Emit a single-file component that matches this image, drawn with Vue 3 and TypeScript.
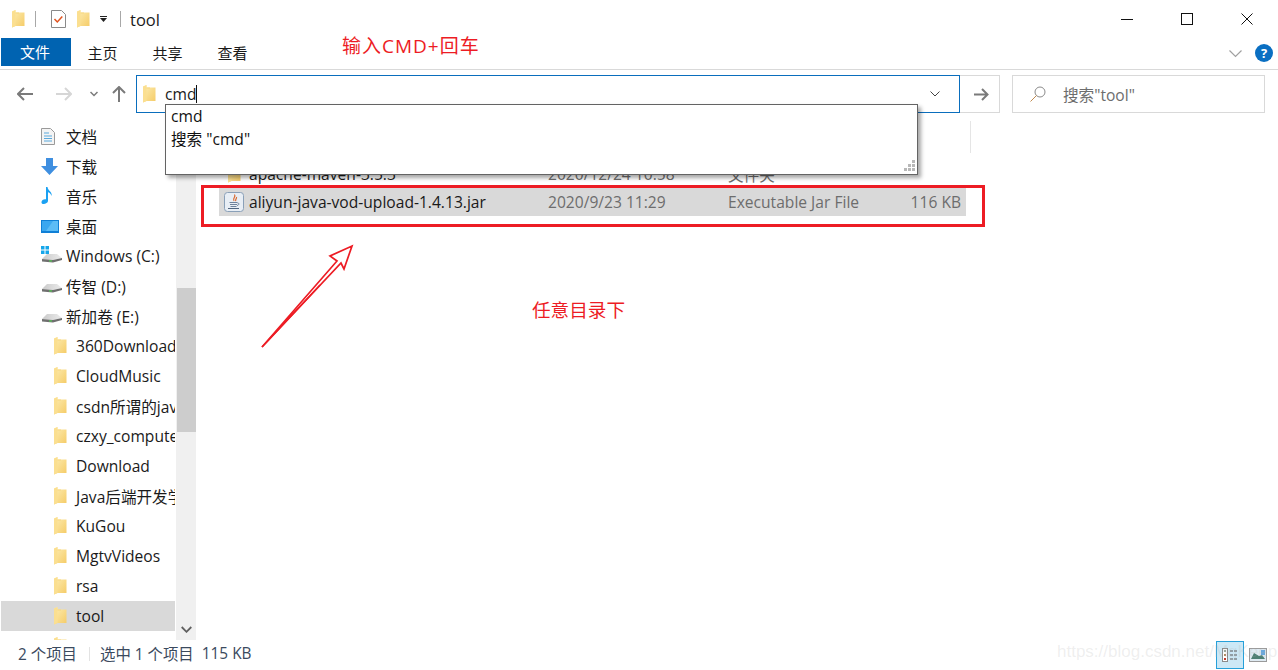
<template>
  <div class="explorer">
    <svg width="0" height="0" class="defs">
      <defs>
        <linearGradient id="fold" x1="0" y1="0" x2="1" y2="1">
          <stop offset="0" stop-color="#fdeeb5" />
          <stop offset="1" stop-color="#f5cb66" />
        </linearGradient>
        <linearGradient id="driveTop" x1="0" y1="0" x2="1" y2="0">
          <stop offset="0" stop-color="#c9c9c9" />
          <stop offset="1" stop-color="#ececec" />
        </linearGradient>
        <symbol id="folder" viewBox="0 0 13 18">
          <path d="M0 1.500 L3.500 0 V2.500 H12.500 V16 H3.500 L0 17.500 Z" fill="url(#fold)" />
          <path d="M0 1.500 L3.500 0 V16 L0 17.500 Z" fill="#fbdf90" />
          <path d="M3.500 2.500 H7 V3.500 H3.500 Z" fill="#f7d77f" />
        </symbol>
        <symbol id="drive" viewBox="0 0 20 10">
          <path d="M0 6 L5 1 H15 L20 5 L11 7 Z" fill="url(#driveTop)" />
          <path d="M0 6 L11 7 L20 5 V7 L11 9.500 L0 8.500 Z" fill="#6f6f6f" />
          <rect x="7" y="7.300" width="3" height="1.300" fill="#58c558" />
        </symbol>
      </defs>
    </svg>

    <header class="titlebar">
      <svg class="ic folder-ic"><use href="#folder" /></svg>
      <span class="vsep first-sep"></span>
      <svg class="check" width="15" height="18" viewBox="0 0 15 18">
        <path d="M.5.5h10l4 4v13H.5z" fill="#fff" stroke="#8a8a8a" />
        <path d="M3.500 9l2.800 3 5-5.500" fill="none" stroke="#e0531f" stroke-width="1.500" />
      </svg>
      <svg class="ic folder-ic second-folder"><use href="#folder" /></svg>
      <svg class="drop" width="7" height="6" viewBox="0 0 7 6">
        <path d="M0 0h7v1H0zM0 2h7L3.500 6z" fill="#222" />
      </svg>
      <span class="vsep second-sep"></span>
      <span class="title">tool</span>
      <div class="win-controls">
        <svg width="12" height="12" viewBox="0 0 12 12"><path d="M0 6.500h12" stroke="#111" /></svg>
        <svg width="12" height="12" viewBox="0 0 12 12"><rect x=".5" y=".5" width="11" height="11" fill="none" stroke="#111" /></svg>
        <svg width="12" height="12" viewBox="0 0 12 12"><path d="M.5.5l11 11M11.500.5l-11 11" stroke="#111" /></svg>
      </div>
    </header>

    <nav class="ribbon">
      <span class="tab file-tab">文件</span>
      <span v-for="t in tabs" :key="t" class="tab">{{ t }}</span>
      <span class="spacer"></span>
      <svg class="ribbon-chevron" width="13" height="8" viewBox="0 0 13 8">
        <path d="M.5.5l6 6 6-6" fill="none" stroke="#a0a0a0" stroke-width="1.200" />
      </svg>
      <span class="help">?</span>
    </nav>

    <div class="navbar">
      <div class="nav-buttons">
        <svg width="16" height="14" viewBox="0 0 16 14"><path d="M1 7h15M7 1L1 7l6 6" fill="none" stroke="#7a7a7a" stroke-width="2" /></svg>
        <svg class="fwd" width="16" height="14" viewBox="0 0 16 14"><path d="M0 7h15M9 1l6 6-6 6" fill="none" stroke="#d6d6d6" stroke-width="2" /></svg>
        <svg class="hist" width="8" height="6" viewBox="0 0 8 6"><path d="M.5 1L4 4.500 7.500 1" fill="none" stroke="#7a7a7a" stroke-width="1.500" /></svg>
        <svg class="up" width="14" height="16" viewBox="0 0 14 16"><path d="M7 16V1M1 7l6-6 6 6" fill="none" stroke="#7a7a7a" stroke-width="2" /></svg>
      </div>
      <div class="address">
        <svg class="ic folder-ic"><use href="#folder" /></svg>
        <span class="address-text">cmd</span><span class="caret"></span>
        <span class="spacer"></span>
        <svg width="10" height="6" viewBox="0 0 10 6"><path d="M.5.5L5 5 9.500.5" fill="none" stroke="#444" /></svg>
      </div>
      <div class="go">
        <svg width="15" height="13" viewBox="0 0 15 13"><path d="M0 6.500h14M8 1l5.500 5.500L8 12" fill="none" stroke="#7a7a7a" stroke-width="2" /></svg>
      </div>
      <div class="search">
        <svg width="16" height="16" viewBox="0 0 16 16"><circle cx="10" cy="6" r="5" fill="none" stroke="#8a8a8a" /><path d="M6.500 9.500L.5 15.500" stroke="#c08a50" /></svg>
        <span>搜索"tool"</span>
      </div>
    </div>

    <main class="body">
      <aside class="sidebar">
        <ul class="tree">
          <li v-for="q in quick" :key="q.label" class="row">
            <span class="quick-ic">
              <svg v-if="q.kind === 'doc'" width="14" height="17" viewBox="0 0 14 17">
                <path d="M.5.5h9l4 4v12H.5z" fill="#f4f4f4" stroke="#9a9a9a" />
                <path d="M3 5h5M3 8h8M3 10.500h8M3 13h8" stroke="#5aa9dc" />
              </svg>
              <svg v-else-if="q.kind === 'dl'" width="17" height="17" viewBox="0 0 17 17">
                <path d="M5 0h7v8h5l-8.500 9L0 8h5z" fill="#3f8fe0" />
              </svg>
              <svg v-else-if="q.kind === 'music'" width="12" height="18" viewBox="0 0 12 18">
                <path d="M5 0h1.500c.5 4 5 4.500 4 9-.5-2.500-2.500-3.500-3.500-3.800V14c0 2.500-6 4.500-6.500 1.500C.2 13 3 11.800 5 12.300z" fill="#1ba1f2" />
              </svg>
              <svg v-else-if="q.kind === 'desk'" width="18" height="13" viewBox="0 0 18 13">
                <rect width="18" height="13" fill="#0f7fd6" />
                <path d="M1 1h16v10H1z" fill="#3aa7f0" />
                <path d="M5 11l7-10h5v10z" fill="#5cbcf6" />
              </svg>
              <span v-else class="drive-wrap">
                <svg class="win-logo" v-if="q.kind === 'win'" width="8" height="8" viewBox="0 0 8 8">
                  <path d="M0 0h3.500v3.500H0zM4.500 0H8v3.500H4.500zM0 4.500h3.500V8H0zM4.500 4.500H8V8H4.500z" fill="#16a6ea" />
                </svg>
                <svg class="drive-ic"><use href="#drive" /></svg>
              </span>
            </span>
            <span class="row-label">{{ q.label }}</span>
          </li>
          <li v-for="f in folders" :key="f" class="row folder-row" :class="{ active: f === 'tool' }">
            <svg class="ic folder-ic"><use href="#folder" /></svg>
            <span class="row-label">{{ f }}</span>
          </li>
          <li class="row folder-row">
            <svg class="ic folder-ic"><use href="#folder" /></svg>
          </li>
        </ul>
        <div class="scrollbar">
          <div class="scroll-gap"></div>
          <div class="thumb"></div>
          <span class="spacer"></span>
          <svg class="scroll-down" width="11" height="7" viewBox="0 0 11 7"><path d="M.7 1L5.500 5.800 10.300 1" fill="none" stroke="#606060" stroke-width="1.800" /></svg>
        </div>
      </aside>

      <section class="files">
        <div class="col-head"><span class="col-sep"></span></div>
        <div class="file-row">
          <span class="file-ic"><svg class="ic folder-ic flat"><use href="#folder" /></svg></span>
          <span class="f-name">apache-maven-3.5.3</span>
          <span class="f-date">2020/12/24 10:58</span>
          <span class="f-type">文件夹</span>
          <span class="f-size"></span>
        </div>
        <div class="file-row selected">
          <span class="file-ic">
            <svg width="20" height="20" viewBox="0 0 20 20">
              <rect x=".5" y=".5" width="19" height="19" rx="3" fill="#e8eef5" stroke="#8aa0b8" />
              <path d="M10.500 2.500c2 2.500-2.500 3.500-.5 6.500M12.500 5c.5 2-2 2.500-.5 4" fill="none" stroke="#d9662b" stroke-width="1.200" />
              <path d="M5.500 10.500h8M6 12.500h7M6.500 14.500h6" stroke="#6f829b" />
              <path d="M13.500 11c2 0 2 2-.5 2.500" fill="none" stroke="#6f829b" />
              <path d="M4 16.500h11" stroke="#4f6580" />
            </svg>
          </span>
          <span class="f-name">aliyun-java-vod-upload-1.4.13.jar</span>
          <span class="f-date">2020/9/23 11:29</span>
          <span class="f-type">Executable Jar File</span>
          <span class="f-size">116 KB</span>
        </div>
      </section>
    </main>

    <footer class="statusbar">
      <span class="st-count">2 个项目</span>
      <span class="st-sep"></span>
      <span class="st-sel">选中 1 个项目</span>
      <span>115 KB</span>
      <span class="spacer"></span>
      <span class="view-btn on">
        <svg width="16" height="14" viewBox="0 0 16 14">
          <rect x=".5" y=".5" width="5" height="13" fill="#fff" stroke="#8a8a8a" />
          <path d="M2 2h2v2H2z" fill="#9aa89a" />
          <path d="M2 6h2v2H2z" fill="#b08a60" />
          <path d="M2 10h2v2H2z" fill="#c0392b" />
          <path d="M8 3h8M8 7h8M8 11h8" stroke="#555" stroke-dasharray="3 1" />
        </svg>
      </span>
      <span class="view-btn">
        <svg width="18" height="14" viewBox="0 0 18 14">
          <rect x=".5" y=".5" width="17" height="13" fill="#dfeaf2" stroke="#9a9a9a" />
          <path d="M12 2h4v5h-4z" fill="#6aa8dc" />
          <path d="M2 11l3-6 5 3 3-1 3 4z" fill="#4d7f73" />
        </svg>
      </span>
    </footer>

    <div class="suggest">
      <div class="suggest-item">cmd</div>
      <div class="suggest-item">搜索 "cmd"</div>
      <svg class="grip" width="12" height="12" viewBox="0 0 12 12">
        <path d="M9 0h3v3H9zM5 4h3v3H5zM9 4h3v3H9zM1 8h3v3H1zM5 8h3v3H5zM9 8h3v3H9z" fill="#b8b8b8" />
      </svg>
    </div>

    <span class="note note-cmd">输入CMD+回车</span>
    <span class="note note-dir">任意目录下</span>
    <div class="red-box"></div>
    <svg class="red-arrow" width="100" height="110" viewBox="0 0 100 110">
      <path d="M2 105L77 19L70 14L92 4L84 27L81 21Z" fill="none" stroke="#ed1c24" stroke-width="1.700" stroke-linejoin="miter" />
      <path d="M2 105L60 43" stroke="#ed1c24" stroke-width="1.500" />
    </svg>
    <span class="watermark">https://blog.csdn.net/MgKeep</span>
  </div>
</template>

<script setup lang="ts">
interface QuickItem {
  label: string
  kind: string
}

const tabs = ['主页', '共享', '查看']

const quick: QuickItem[] = [
  { label: '文档', kind: 'doc' },
  { label: '下载', kind: 'dl' },
  { label: '音乐', kind: 'music' },
  { label: '桌面', kind: 'desk' },
  { label: 'Windows (C:)', kind: 'win' },
  { label: '传智 (D:)', kind: 'drive' },
  { label: '新加卷 (E:)', kind: 'drive' }
]

const folders = [
  '360Downloads',
  'CloudMusic',
  'csdn所谓的java',
  'czxy_computer',
  'Download',
  'Java后端开发学习',
  'KuGou',
  'MgtvVideos',
  'rsa',
  'tool'
]
</script>

<style>
html,
body {
  overflow: hidden;
  background: #fff;
}
</style>

<style scoped>
.explorer {
  position: relative;
  width: 1278px;
  height: 670px;
  overflow: hidden;
  display: flex;
  flex-direction: column;
  background: #fff;
  color: #1a1a1a;
  font-family: "Open Sans", "Noto Sans CJK SC", sans-serif;
  font-size: 15.6px;
}

.defs {
  position: absolute;
}

.spacer {
  flex: 1;
}

.ic {
  display: block;
  flex: none;
}

.folder-ic {
  width: 13px;
  height: 18px;
}

.titlebar {
  height: 38px;
  flex: none;
  display: flex;
  align-items: center;
  padding-left: 12px;
}

.vsep {
  width: 1px;
  height: 16px;
  background: #a8a8a8;
}

.first-sep {
  margin-left: 10px;
}

.check {
  margin-left: 15px;
}

.second-folder {
  margin-left: 11px;
}

.drop {
  margin-left: 10px;
}

.second-sep {
  margin-left: 13px;
}

.title {
  margin-left: 9px;
  font-size: 16.5px;
}

.win-controls {
  margin-left: auto;
  display: flex;
  gap: 48px;
  padding-right: 25px;
}

.ribbon {
  height: 32px;
  flex: none;
  display: flex;
  align-items: flex-start;
  border-bottom: 1px solid #d9d9d9;
  box-sizing: border-box;
  padding-left: 1px;
}

.tab {
  width: 65px;
  height: 28px;
  box-sizing: border-box;
  padding-right: 2px;
  line-height: 31px;
  text-align: center;
  font-size: 15px;
}

.file-tab {
  width: 70px;
  background: #0063b1;
  color: #fff;
  line-height: 28px;
}

.ribbon-chevron {
  margin-top: 12px;
}

.help {
  width: 18px;
  height: 18px;
  margin: 6px 5px 0 13px;
  border-radius: 50%;
  background: #0a6fc2;
  color: #fff;
  font-size: 13px;
  font-weight: 700;
  line-height: 18px;
  text-align: center;
}

.navbar {
  height: 51px;
  flex: none;
  display: flex;
  align-items: flex-start;
  padding-top: 5px;
  box-sizing: border-box;
}

.nav-buttons {
  width: 136px;
  height: 38px;
  flex: none;
  display: flex;
  align-items: center;
  padding-left: 17px;
  box-sizing: border-box;
}

.fwd {
  margin-left: 23px;
}

.hist {
  margin-left: 18px;
}

.up {
  margin-left: 14px;
}

.address {
  width: 824px;
  height: 38px;
  flex: none;
  box-sizing: border-box;
  border: 1px solid #0a6ebd;
  display: flex;
  align-items: center;
  padding: 0 19px 0 6px;
}

.address-text {
  margin-left: 9px;
}

.caret {
  width: 1px;
  height: 18px;
  background: #111;
}

.go {
  width: 40px;
  height: 38px;
  flex: none;
  box-sizing: border-box;
  border: 1px solid #d9d9d9;
  border-left: none;
  display: flex;
  align-items: center;
  justify-content: center;
  padding-left: 3px;
}

.search {
  width: 253px;
  height: 38px;
  flex: none;
  margin-left: 12px;
  box-sizing: border-box;
  border: 1px solid #d9d9d9;
  display: flex;
  align-items: center;
  gap: 17px;
  padding-left: 17px;
  color: #6d6d6d;
}

.body {
  flex: 1;
  min-height: 0;
  display: flex;
}

.sidebar {
  width: 196px;
  flex: none;
  display: flex;
  overflow: hidden;
}

.tree {
  width: 175px;
  flex: none;
  margin: 0;
  padding: 0 0 0 1px;
  list-style: none;
  overflow: hidden;
  box-sizing: border-box;
}

.row {
  height: 30px;
  display: flex;
  align-items: center;
  white-space: nowrap;
  overflow: hidden;
  padding-left: 40px;
}

.folder-row {
  padding-left: 53px;
  gap: 9px;
}

.row.active {
  background: #d9d9d9;
}

.quick-ic {
  width: 25px;
  height: 20px;
  flex: none;
  display: flex;
  align-items: center;
}

.drive-wrap {
  position: relative;
  display: block;
  width: 20px;
  height: 20px;
}

.drive-ic {
  position: absolute;
  left: 1px;
  top: 7px;
  width: 20px;
  height: 10px;
}

.win-logo {
  position: absolute;
  left: 0;
  top: 0;
}

.scrollbar {
  width: 20px;
  flex: none;
  margin-left: 1px;
  background: #f0f0f0;
  display: flex;
  flex-direction: column;
  align-items: center;
}

.scroll-gap {
  height: 167px;
}

.thumb {
  width: 19px;
  height: 144px;
  background: #cdcdcd;
  flex: none;
}

.scroll-down {
  margin-bottom: 7px;
}

.files {
  flex: 1;
  padding-left: 23px;
}

.col-head {
  height: 39px;
}

.col-sep {
  display: block;
  width: 1px;
  height: 32px;
  margin-left: 751px;
  background: #e5e5e5;
}

.file-row {
  width: 747px;
  height: 28px;
  display: flex;
  align-items: center;
  color: #6d6d6d;
  white-space: nowrap;
}

.file-row.selected {
  background: #d9d9d9;
}

.file-ic {
  width: 30px;
  flex: none;
  display: flex;
  justify-content: center;
}

.f-name {
  width: 299px;
  flex: none;
  color: #1a1a1a;
}

.f-date {
  width: 180px;
  flex: none;
}

.f-type {
  width: 150px;
  flex: none;
}

.f-size {
  width: 83px;
  flex: none;
  text-align: right;
}

.statusbar {
  height: 30px;
  flex: none;
  display: flex;
  align-items: center;
  padding: 0 6px 3px 18px;
  box-sizing: border-box;
  font-size: 15.4px;
  color: #3b4a5e;
}

.st-sep {
  width: 1px;
  height: 14px;
  margin: 0 10px 0 12px;
  background: #e3e3e3;
}

.st-sel {
  margin-right: 8px;
}

.view-btn {
  width: 28px;
  height: 28px;
  margin-bottom: -3px;
  box-sizing: border-box;
  display: flex;
  align-items: center;
  justify-content: center;
}

.view-btn.on {
  background: #cce8f6;
  border: 1px solid #26a0da;
}

.suggest {
  position: absolute;
  left: 165px;
  top: 104px;
  width: 753px;
  height: 71px;
  box-sizing: border-box;
  border: 1px solid #646464;
  background: #fff;
  box-shadow: 3px 3px 4px rgba(0, 0, 0, 0.35);
  padding-left: 5px;
  color: #111;
}

.suggest-item {
  height: 23px;
  line-height: 23px;
}

.grip {
  position: absolute;
  right: 2px;
  bottom: 2px;
}

.note {
  position: absolute;
  color: #ed1c24;
  font-size: 19px;
  line-height: 24px;
  white-space: nowrap;
}

.note-cmd {
  left: 342px;
  top: 34px;
  letter-spacing: 1px;
}

.note-dir {
  left: 532px;
  top: 298px;
  font-size: 18.6px;
}

.red-box {
  position: absolute;
  left: 201px;
  top: 185px;
  width: 784px;
  height: 42px;
  box-sizing: border-box;
  border: 3px solid #ed1c24;
}

.red-arrow {
  position: absolute;
  left: 260px;
  top: 242px;
}

.watermark {
  position: absolute;
  left: 1057px;
  top: 642px;
  color: rgba(170, 170, 170, 0.2);
  font-family: "Liberation Sans", sans-serif;
  font-size: 17px;
  white-space: nowrap;
}
</style>
